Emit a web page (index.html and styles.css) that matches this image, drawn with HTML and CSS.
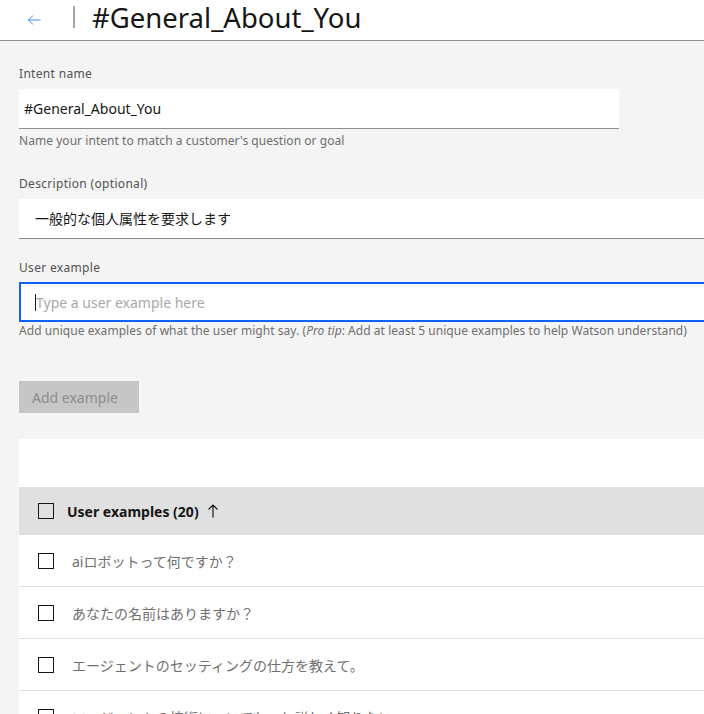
FILE: index.html
```html
<!DOCTYPE html>
<html lang="ja">
<head>
<meta charset="utf-8">
<link rel="stylesheet" href="styles.css">
</head>
<body>
<header class="topbar">
  <span class="back">
    <svg width="16" height="16" viewBox="0 0 16 16"><path d="M2.5 8h12M7 3.5L2.5 8 7 12.5" fill="none" stroke="#4589ff" stroke-width="1"/></svg>
  </span>
  <span class="divider"></span>
  <h1 class="title">#General_About_You</h1>
</header>
<main class="content">
  <div class="field">
    <label class="label">Intent name</label>
    <div class="input input-name">#General_About_You</div>
    <div class="helper">Name your intent to match a customer's question or goal</div>
  </div>
  <div class="field">
    <label class="label">Description (optional)</label>
    <div class="input input-wide pad16">一般的な個人属性を要求します</div>
  </div>
  <div class="field">
    <label class="label label-tight">User example</label>
    <div class="input input-wide pad16 focused"><span class="caret"></span><span class="placeholder">Type a user example here</span></div>
    <div class="helper helper-tight">Add unique examples of what the user might say. (<i>Pro tip</i>: Add at least 5 unique examples to help Watson understand)</div>
  </div>
  <button class="btn">Add example</button>
  <section class="table">
    <div class="toolbar"></div>
    <div class="row head"><span class="check"></span><span class="head-text">User examples (20)</span>
      <svg class="sort" width="16" height="16" viewBox="0 0 16 16"><path d="M8 14.5V2M3.5 6.5L8 2l4.5 4.5" fill="none" stroke="#161616" stroke-width="1.2"/></svg>
    </div>
    <div class="row"><span class="check"></span><span class="cell">aiロボットって何ですか？</span></div>
    <div class="row"><span class="check"></span><span class="cell">あなたの名前はありますか？</span></div>
    <div class="row"><span class="check"></span><span class="cell">エージェントのセッティングの仕方を教えて。</span></div>
    <div class="row"><span class="check"></span><span class="cell">エージェントの技術についてもっと詳しく知りたい</span></div>
  </section>
</main>
</body>
</html>
```
FILE: styles.css
```css
html, body {
  margin: 0;
  padding: 0;
  background: #f4f4f4;
  overflow: hidden;
  width: 704px;
  height: 714px;
}
body {
  font-family: "Noto Sans", "Noto Sans CJK JP", sans-serif;
  color: #161616;
}
.topbar {
  height: 40px;
  background: #fff;
  border-bottom: 1px solid #8d8d8d;
  display: flex;
  align-items: center;
}
.back {
  width: 16px;
  height: 16px;
  margin-left: 26px;
  display: flex;
}
.divider {
  width: 2px;
  height: 22px;
  background: #a8a8a8;
  margin-left: 31px;
  align-self: flex-start;
  margin-top: 6px;
}
.title {
  align-self: flex-start;
  margin: 3px 0 0 17px;
  font-size: 27.5px;
  font-weight: 400;
  line-height: 30px;
  letter-spacing: 0;
}
.content {
  padding: 25px 0 0 19px;
}
.field {
  display: flex;
  flex-direction: column;
}
.label {
  font-size: 12px;
  line-height: 16px;
  color: #525252;
  letter-spacing: 0.32px;
  margin-bottom: 7px;
}
.label-tight {
  margin-bottom: 6px;
}
.input {
  height: 39px;
  background: #fff;
  border-bottom: 1px solid #8d8d8d;
  font-size: 14px;
  line-height: 39px;
  box-sizing: content-box;
  display: flex;
  align-items: center;
  white-space: nowrap;
}
.input-name {
  width: 595px;
  padding-left: 5px;
}
.input-wide {
  width: 720px;
}
.pad16 {
  padding-left: 16px;
}
.focused {
  height: 36px;
  border: 2px solid #0f62fe;
  padding-left: 14px;
}
.caret {
  width: 1px;
  height: 17px;
  background: #161616;
}
.placeholder {
  color: #a8a8a8;
}
.helper {
  font-size: 12px;
  line-height: 16px;
  color: #6f6f6f;
  margin-top: 4px;
  margin-bottom: 27px;
  letter-spacing: 0.045px;
  white-space: nowrap;
}
.helper-tight {
  margin-top: 1px;
  margin-bottom: 42px;
}
.field:nth-child(2) .input {
  margin-bottom: 21px;
}
.btn {
  display: block;
  width: 120px;
  height: 32px;
  border: 0;
  background: #c6c6c6;
  color: #8d8d8d;
  font-family: inherit;
  font-size: 14px;
  text-align: left;
  padding: 0 0 0 13px;
  margin: 0 0 26px 0;
}
.table {
  background: #fff;
  width: 720px;
}
.toolbar {
  height: 48px;
}
.row {
  height: 51px;
  border-bottom: 1px solid #e0e0e0;
  display: flex;
  align-items: center;
  font-size: 14px;
}
.row.head {
  height: 48px;
  border-bottom: 0;
  background: #e0e0e0;
}
.check {
  width: 14px;
  height: 14px;
  border: 1px solid #161616;
  margin-left: 19px;
  flex: none;
}
.head-text {
  font-weight: 700;
  margin-left: 13px;
}
.sort {
  margin-left: 6px;
}
.cell {
  margin-left: 18px;
  color: #6f6f6f;
}
```
